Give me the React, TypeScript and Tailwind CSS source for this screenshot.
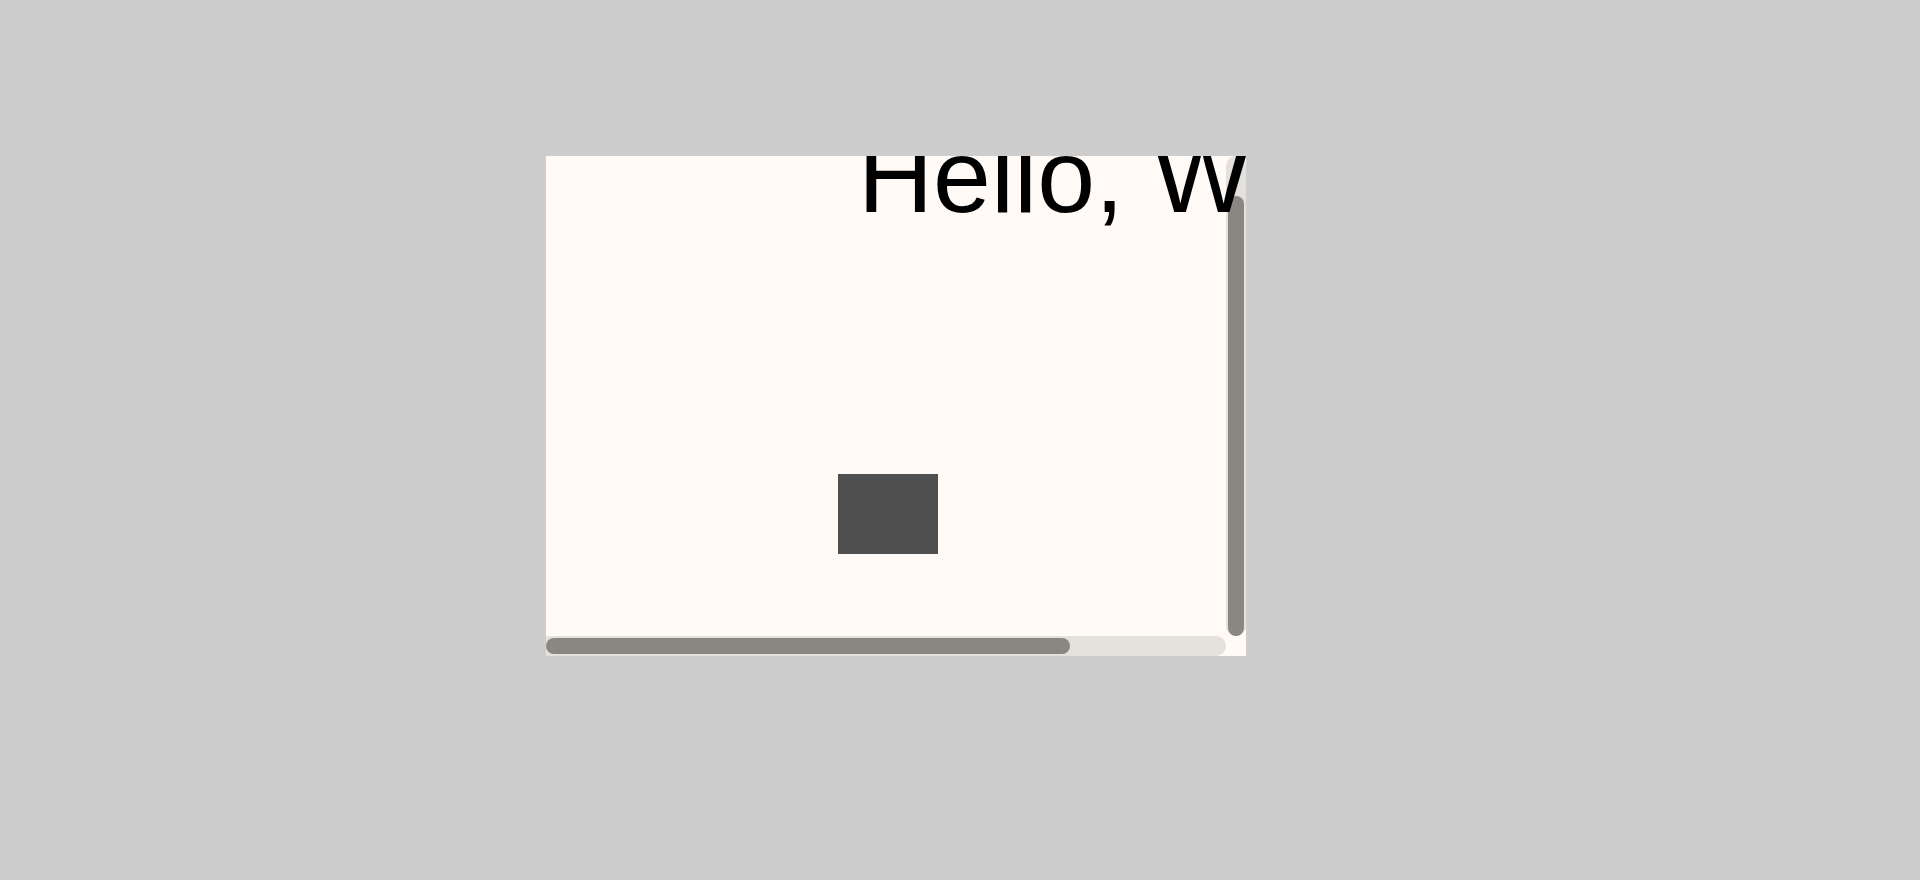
function HorizontalScrollbar() {
  return (
    <div role="scrollbar" aria-label="Scroll horizontally" aria-controls="canvas" aria-orientation="horizontal" aria-valuenow={0} className="rounded-r-[10px] bg-[#e4e1dc] py-0.5">
      <div className="h-4 w-[77%] rounded-full bg-[#888781]" />
    </div>
  );
}

function VerticalScrollbar() {
  return (
    <div role="scrollbar" aria-label="Scroll vertically" aria-controls="canvas" aria-orientation="vertical" aria-valuenow={100} className="flex flex-col justify-end rounded-[10px] bg-[#e4e1dc] px-0.5">
      <div className="h-[440px] rounded-full bg-[#888781]" />
    </div>
  );
}

export default function App() {
  return (
    <main className="min-h-screen bg-[#cdcdcd] pt-[156px] pl-[546px] font-['Liberation_Sans',sans-serif]">
      <section className="relative grid h-[500px] w-full max-w-[700px] grid-cols-[1fr_20px] grid-rows-[1fr_20px] overflow-hidden bg-[#fffaf6]">
        <div id="canvas">
          <p className="absolute top-[-40px] left-[312px] z-10 text-[104px] leading-[120px] whitespace-nowrap text-black">Hello, W</p>
          <div className="absolute top-[318px] left-[292px] h-20 w-[100px] bg-[#505050]" />
        </div>
        <VerticalScrollbar />
        <HorizontalScrollbar />
      </section>
    </main>
  );
}
